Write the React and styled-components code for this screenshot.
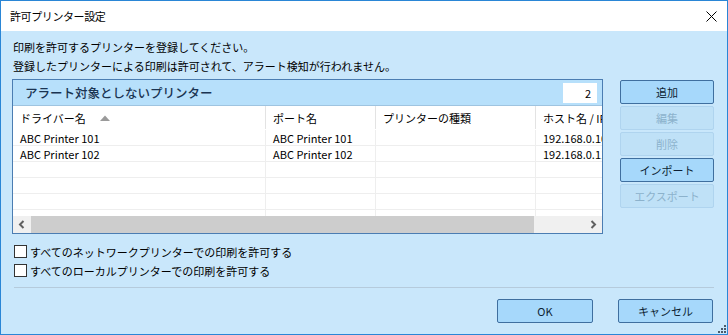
import React from "react";
import styled, { createGlobalStyle } from "styled-components";

const Global = createGlobalStyle`
  html, body { margin: 0; padding: 0; background: #ffffff; }
  body { font-family: "Noto Sans CJK JP", "Noto Sans", sans-serif; color: #000; }
  * { box-sizing: border-box; }
`;

const Window = styled.div`
  position: relative;
  width: 728px;
  height: 335px;
  border: 1px solid #2a86d6;
  display: flex;
  flex-direction: column;
  overflow: hidden;
`;

const TitleBar = styled.div`
  height: 30px;
  flex: none;
  background: #ffffff;
  display: flex;
  align-items: center;
  justify-content: space-between;
  padding: 0 10px 0 9px;
  font-size: 11px;
  letter-spacing: -0.4px;
  color: #000;
`;

const CloseIcon = styled.svg`
  width: 11px;
  height: 11px;
`;

const Body = styled.div`
  flex: 1;
  background: #c9e7fb;
  padding: 7px 12px 0 11px;
  display: flex;
  flex-direction: column;
`;

const Intro = styled.div`
  font-size: 11px;
  line-height: 19px;
  padding-left: 1px;
`;

const MainRow = styled.div`
  display: flex;
  gap: 17px;
  margin-top: 3px;
`;

const Group = styled.div`
  width: 591px;
  height: 155px;
  border: 1px solid #4b7db2;
  display: flex;
  flex-direction: column;
  background: #ffffff;
`;

const GroupHeader = styled.div`
  height: 26px;
  flex: none;
  background: #b7e0fb;
  display: flex;
  align-items: center;
  justify-content: space-between;
  padding: 0 5px 0 12px;
  border-bottom: 1px solid #9fc4e0;
`;

const GroupTitle = styled.div`
  font-size: 12.5px;
  color: #1a3452;
  font-weight: 500;
`;

const CountBox = styled.div`
  width: 34px;
  height: 20px;
  background: #ffffff;
  font-size: 11px;
  text-align: right;
  padding-right: 6px;
  line-height: 20px;
`;

const Table = styled.div`
  flex: 1;
  overflow: hidden;
  display: flex;
  flex-direction: column;
`;

const Row = styled.div`
  display: grid;
  grid-template-columns: 253px 110px 160px 140px;
  height: ${(p) => (p.$header ? "24px" : "16px")};
  flex: none;
  border-bottom: 1px solid ${(p) => (p.$header ? "transparent" : "#eeeeee")};
`;

const Cell = styled.div`
  font-size: 11px;
  padding-left: 7px;
  white-space: nowrap;
  overflow: hidden;
  border-right: 1px solid ${(p) => (p.$header ? "#e3e3e3" : "#eeeeee")};
  display: flex;
  align-items: center;
`;

const SortArrow = styled.svg`
  width: 10px;
  height: 6px;
  margin-left: 14px;
`;

const HScroll = styled.div`
  height: 17px;
  flex: none;
  display: flex;
  background: #f0f0f0;
`;

const ScrollArrow = styled.div`
  width: 18px;
  flex: none;
  display: flex;
  align-items: center;
  justify-content: center;
`;

const ScrollTrack = styled.div`
  flex: 1;
  display: flex;
  align-items: stretch;
`;

const Thumb = styled.div`
  width: 503px;
  background: #cdcdcd;
`;

const ButtonCol = styled.div`
  display: flex;
  flex-direction: column;
  gap: 2px;
  padding-top: 1px;
`;

const Btn = styled.button`
  width: ${(p) => p.$w || "94px"};
  height: 24px;
  font-family: inherit;
  font-size: 11px;
  padding: 0;
  border-radius: 2px;
  border: 1px solid ${(p) => (p.disabled ? "#afd4ef" : "#3f6f9f")};
  background: ${(p) => (p.disabled ? "#bfe1f7" : "#a6d8fb")};
  color: ${(p) => (p.disabled ? "#8cb2cc" : "#0d1f33")};
`;

const Checks = styled.div`
  margin-top: 8px;
  display: flex;
  flex-direction: column;
  padding-left: 2px;
`;

const CheckRow = styled.label`
  display: flex;
  align-items: center;
  height: 19px;
  font-size: 11px;
  gap: 3px;
`;

const Box = styled.span`
  width: 13px;
  height: 13px;
  background: #ffffff;
  border: 1px solid #333333;
  flex: none;
`;

const Separator = styled.div`
  margin-top: 7px;
  margin-left: 2px;
  margin-right: 1px;
  height: 1px;
  background: #b5cbdc;
`;

const Footer = styled.div`
  margin-top: 11px;
  display: flex;
  justify-content: flex-end;
  gap: 25px;
  padding-right: 2px;
`;

const Grip = styled.svg`
  position: absolute;
  right: 1px;
  bottom: 1px;
  width: 8px;
  height: 8px;
`;

const columns = ["ドライバー名", "ポート名", "プリンターの種類", "ホスト名 / IP"];
const data = [
  ["ABC Printer 101", "ABC Printer 101", "", "192.168.0.10"],
  ["ABC Printer 102", "ABC Printer 102", "", "192.168.0.11"],
  ["", "", "", ""],
  ["", "", "", ""],
  ["", "", "", ""],
  ["", "", "", ""],
];

function Chevron({ dir }) {
  return (
    <svg width="8" height="9" viewBox="0 0 8 9">
      {dir === "left" ? (
        <path d="M5.5 1 L2 4.5 L5.5 8" stroke="#606060" strokeWidth="2" fill="none" />
      ) : (
        <path d="M2.5 1 L6 4.5 L2.5 8" stroke="#606060" strokeWidth="2" fill="none" />
      )}
    </svg>
  );
}

export default function App() {
  return (
    <>
      <Global />
      <Window>
        <TitleBar>
          <span>許可プリンター設定</span>
          <CloseIcon viewBox="0 0 11 11">
            <path d="M0.5 0.5 L10.5 10.5 M10.5 0.5 L0.5 10.5" stroke="#000" strokeWidth="1" />
          </CloseIcon>
        </TitleBar>
        <Body>
          <Intro>
            <div>印刷を許可するプリンターを登録してください。</div>
            <div>登録したプリンターによる印刷は許可されて、アラート検知が行われません。</div>
          </Intro>
          <MainRow>
            <Group>
              <GroupHeader>
                <GroupTitle>アラート対象としないプリンター</GroupTitle>
                <CountBox>2</CountBox>
              </GroupHeader>
              <Table>
                <Row $header>
                  {columns.map((c, i) => (
                    <Cell key={c} $header>
                      {c}
                      {i === 0 && (
                        <SortArrow viewBox="0 0 10 6">
                          <path d="M0 6 L5 0.5 L10 6 Z" fill="#9a9a9a" />
                        </SortArrow>
                      )}
                    </Cell>
                  ))}
                </Row>
                {data.map((r, i) => (
                  <Row key={i}>
                    {r.map((v, j) => (
                      <Cell key={j}>{v}</Cell>
                    ))}
                  </Row>
                ))}
              </Table>
              <HScroll>
                <ScrollArrow>
                  <Chevron dir="left" />
                </ScrollArrow>
                <ScrollTrack>
                  <Thumb />
                </ScrollTrack>
                <ScrollArrow>
                  <Chevron dir="right" />
                </ScrollArrow>
              </HScroll>
            </Group>
            <ButtonCol>
              <Btn>追加</Btn>
              <Btn disabled>編集</Btn>
              <Btn disabled>削除</Btn>
              <Btn>インポート</Btn>
              <Btn disabled>エクスポート</Btn>
            </ButtonCol>
          </MainRow>
          <Checks>
            <CheckRow>
              <Box />
              すべてのネットワークプリンターでの印刷を許可する
            </CheckRow>
            <CheckRow>
              <Box />
              すべてのローカルプリンターでの印刷を許可する
            </CheckRow>
          </Checks>
          <Separator />
          <Footer>
            <Btn $w="96px">OK</Btn>
            <Btn $w="95px">キャンセル</Btn>
          </Footer>
        </Body>
        <Grip viewBox="0 0 8 8">
          <rect x="6" y="0" width="2" height="2" fill="#4a5a6a" />
          <rect x="3" y="3" width="2" height="2" fill="#4a5a6a" />
          <rect x="6" y="3" width="2" height="2" fill="#4a5a6a" />
          <rect x="0" y="6" width="2" height="2" fill="#4a5a6a" />
          <rect x="3" y="6" width="2" height="2" fill="#4a5a6a" />
          <rect x="6" y="6" width="2" height="2" fill="#4a5a6a" />
        </Grip>
      </Window>
    </>
  );
}
